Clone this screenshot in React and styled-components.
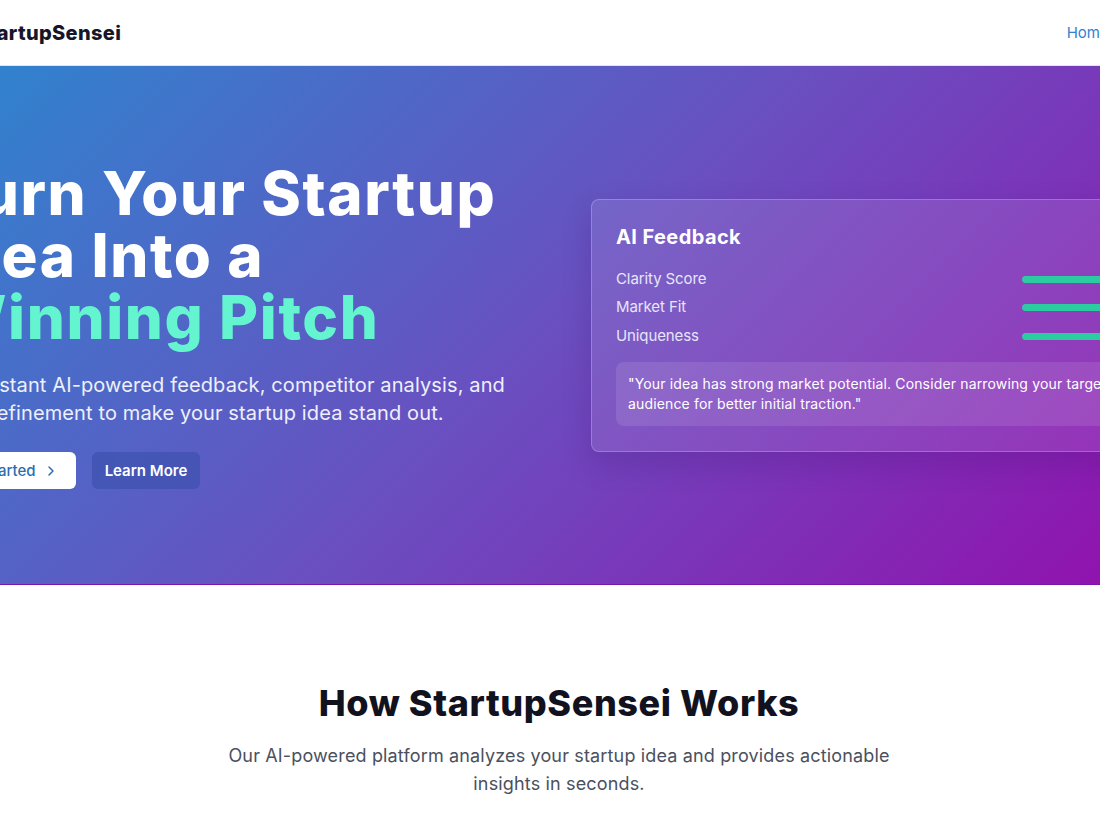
import styled, { createGlobalStyle } from 'styled-components';
import { ChevronRight } from 'lucide-react';

const GlobalStyle = createGlobalStyle`
	html, body {
		margin: 0;
		padding: 0;
		overflow: hidden;
		background: #ffffff;
	}
	* {
		box-sizing: border-box;
	}
	body {
		font-family: Inter, 'Noto Sans', sans-serif;
		color: #1a202c;
	}
`;

const App = () => {
	// Feedback rows in the card
	const scores = [
		{ label: 'Clarity Score', value: 85 },
		{ label: 'Market Fit', value: 72 },
		{ label: 'Uniqueness', value: 90 },
	];

	return (
		<>
			<GlobalStyle />
			<Page>
				<Navbar>
					<Container>
						<NavInner>
							<Logo>
								<LogoMark>
									<svg width="22" height="22" viewBox="0 0 24 24" fill="none" stroke="#3182ce" strokeWidth="2.2" strokeLinecap="round" strokeLinejoin="round">
										<path d="M12 2l3 7h7l-5.5 4.5L18.5 21 12 16.5 5.5 21l2-7.5L2 9h7z" />
									</svg>
								</LogoMark>
								StartupSensei
							</Logo>
							<NavLinks>
								<NavLink $active>Home</NavLink>
								<NavLink>About</NavLink>
							</NavLinks>
						</NavInner>
					</Container>
				</Navbar>

				<Hero>
					<Container>
						<HeroGrid>
							<HeroText>
								<Title>
									Turn Your Startup Idea Into a <Accent>Winning Pitch</Accent>
								</Title>
								<Lead>
									Get instant AI-powered feedback, competitor analysis, and idea
									refinement to make your startup idea stand out.
								</Lead>
								<Buttons>
									<PrimaryButton>
										Get Started <ChevronRight size={16} strokeWidth={2.2} />
									</PrimaryButton>
									<GhostButton>Learn More</GhostButton>
								</Buttons>
							</HeroText>

							<FeedbackCard>
								<CardTitle>AI Feedback</CardTitle>
								<ScoreList>
									{scores.map((s) => (
										<ScoreRow key={s.label}>
											<span>{s.label}</span>
											<Track>
												<Fill style={{ width: `${s.value}%` }} />
											</Track>
										</ScoreRow>
									))}
								</ScoreList>
								<Quote>
									"Your idea has strong market potential. Consider narrowing your
									target audience for better initial traction."
								</Quote>
							</FeedbackCard>
						</HeroGrid>
					</Container>
				</Hero>

				<HowSection>
					<Container>
						<SectionTitle>How StartupSensei Works</SectionTitle>
						<SectionLead>
							Our AI-powered platform analyzes your startup idea and provides
							actionable insights in seconds.
						</SectionLead>
					</Container>
				</HowSection>
			</Page>
		</>
	);
};

const Page = styled.div`
	width: 1118px;
	min-height: 100vh;
`;

const Container = styled.div`
	width: 1280px;
	margin: 0 -81px;
	padding: 0 24px;
`;

const Navbar = styled.header`
	height: 66px;
	background: #ffffff;
	border-bottom: 1px solid #e6e1f3;
	display: flex;
	align-items: center;
`;

const NavInner = styled.div`
	display: flex;
	align-items: center;
	justify-content: space-between;
`;

const Logo = styled.div`
	display: flex;
	align-items: center;
	gap: 8px;
	font-family: Inter, sans-serif;
	font-weight: 800;
	font-size: 20px;
	letter-spacing: 0.35px;
	color: #161629;
`;

const LogoMark = styled.span`
	display: flex;
	width: 24px;
	height: 24px;
	align-items: center;
	justify-content: center;
`;

const NavLinks = styled.nav`
	display: flex;
	gap: 24px;
`;

const NavLink = styled.a`
	font-size: 15px;
	color: ${(p) => (p.$active ? '#3182ce' : '#4a5568')};
	text-decoration: none;
`;

const Hero = styled.section`
	background: linear-gradient(135deg, #3182ce 0%, #6a4fc0 50%, #9112ae 100%);
	padding: 96px 0;
	box-shadow: inset 0 -1px 0 #7c14b0;
`;

const HeroGrid = styled.div`
	display: grid;
	grid-template-columns: 1fr 1fr;
	gap: 64px;
	align-items: center;
`;

const HeroText = styled.div`
	color: #ffffff;
`;

const Title = styled.h1`
	margin: 0 0 23px;
	font-family: Inter, sans-serif;
	font-weight: 800;
	font-size: 60px;
	line-height: 62px;
	letter-spacing: 1.6px;
	color: #ffffff;
`;

const Accent = styled.span`
	display: block;
	color: #64f4cf;
`;

const Lead = styled.p`
	margin: 0 0 25px;
	font-size: 20px;
	line-height: 28px;
	letter-spacing: 0.12px;
	color: #eef0fb;
	max-width: 584px;
`;

const Buttons = styled.div`
	display: flex;
	gap: 16px;
`;

const PrimaryButton = styled.button`
	display: inline-flex;
	align-items: center;
	gap: 7px;
	height: 37px;
	padding: 0 17px 0 11px;
	border: none;
	border-radius: 6px;
	background: #ffffff;
	color: #2b6cb0;
	font-family: Inter, sans-serif;
	font-weight: 500;
	font-size: 15px;
`;

const GhostButton = styled.button`
	height: 37px;
	padding: 0 13px;
	border: none;
	border-radius: 6px;
	background: rgba(56, 78, 172, 0.6);
	color: #ffffff;
	font-family: Inter, sans-serif;
	font-weight: 600;
	font-size: 15px;
`;

const FeedbackCard = styled.div`
	background: rgba(255, 255, 255, 0.1);
	border: 1px solid rgba(255, 255, 255, 0.22);
	border-radius: 8px;
	padding: 23px 24px 25px;
	box-shadow: 0 12px 30px rgba(40, 10, 90, 0.18);
	color: #ffffff;
`;

const CardTitle = styled.h3`
	margin: 0 0 18px;
	font-family: Inter, sans-serif;
	font-weight: 700;
	font-size: 20px;
	line-height: 28px;
	letter-spacing: 0.4px;
`;

const ScoreList = styled.div`
	display: flex;
	flex-direction: column;
	gap: 8px;
	margin-bottom: 16px;
`;

const ScoreRow = styled.div`
	display: flex;
	align-items: center;
	justify-content: space-between;
	font-size: 15px;
	line-height: 20.5px;
	letter-spacing: -0.1px;
	color: #e6e6fa;
`;

const Track = styled.div`
	width: 128px;
	height: 7px;
	border-radius: 4px;
	background: rgba(255, 255, 255, 0.2);
	overflow: hidden;
`;

const Fill = styled.div`
	height: 100%;
	min-width: 100%;
	border-radius: 4px;
	background: #2bcca0;
`;

const Quote = styled.div`
	background: rgba(255, 255, 255, 0.1);
	border-radius: 8px;
	padding: 12px 12px;
	font-size: 14px;
	line-height: 20px;
	letter-spacing: 0.15px;
	color: #ffffff;
`;

const HowSection = styled.section`
	padding: 96px 0;
	text-align: center;
`;

const SectionTitle = styled.h2`
	margin: 0 0 17px;
	font-family: Inter, sans-serif;
	font-weight: 800;
	font-size: 36px;
	line-height: 44px;
	letter-spacing: 0.6px;
	color: #12121f;
`;

const SectionLead = styled.p`
	margin: 0 auto;
	max-width: 672px;
	font-size: 18px;
	line-height: 28px;
	letter-spacing: 0.15px;
	color: #4a5060;
`;

export default App;
